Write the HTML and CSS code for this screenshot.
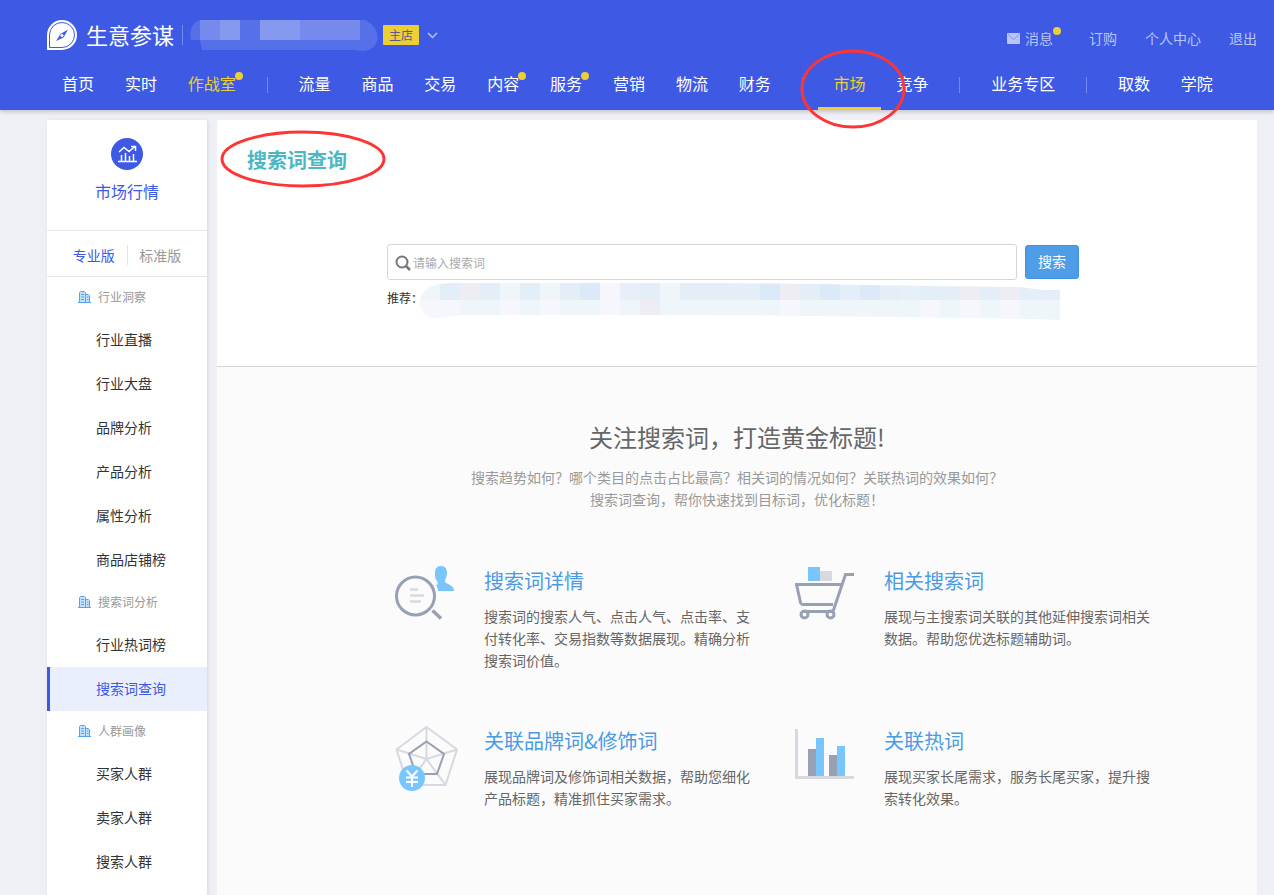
FILE: index.html
```html
<!DOCTYPE html>
<html lang="zh-CN">
<head>
<meta charset="utf-8">
<title>生意参谋 - 搜索词查询</title>
<link rel="stylesheet" href="styles.css">
</head>
<body>
<svg class="defs" width="0" height="0" aria-hidden="true">
  <symbol id="building" viewBox="0 0 13 12">
    <path fill="#c5e0f9" d="M2 1h5v10H2zM8 4h3v7H8z"/>
    <path fill="none" stroke="#55a4ec" d="M0 11.5h13M1.500 11V1.500L2.500.5h4l1 1V11M7.500 3.500h3l1 1V11M3 3.500h3M3 6h3M3 8.500h3M9 6h1.500M9 8.500h1.500"/>
  </symbol>
</svg>
<header class="header">
  <div class="topbar">
    <a class="logo" href="#">
      <svg width="30" height="30" viewBox="0 0 30 30" aria-hidden="true">
        <path fill="#fff" d="M0 30V15A15 15 0 1 1 15 30z"/>
        <path fill="none" stroke="#3e5ae4" stroke-width="1" d="M2.500 27.500V15A12.500 12.500 0 1 1 15 27.500z"/>
        <path fill="#3e5ae4" d="M21 9.500 16.500 17.500 9 21l4.500-7z"/>
        <circle cx="15" cy="15.500" r="1.500" fill="#fff"/>
      </svg>
      <span>生意参谋</span>
    </a>
    <span class="topbar-line"></span>
    <svg class="shop-name" width="188" height="32" viewBox="0 0 188 32" aria-hidden="true">
      <path fill="#5670e7" d="M10 1H175C192 8 192 31 173 32L164 31H12L10 21H1C-1 11 2 4 10 1z"/>
      <path fill="#758aec" d="M10 1h20v20H10zM110 1h60v20h-60z"/>
      <path fill="#8599ef" d="M30 1h20v20H30zM70 1h40v20H70z"/>
    </svg>
    <span class="shop-tag">主店</span>
    <svg class="caret" width="11" height="7" viewBox="0 0 11 7" aria-hidden="true"><path fill="none" stroke="#b4c0f5" stroke-width="1.500" d="M1 1l4.500 4.500L10 1"/></svg>
    <div class="user-links">
      <a class="has-dot" href="#"><svg width="13" height="11" viewBox="0 0 13 11" aria-hidden="true"><rect width="13" height="11" rx="1" fill="#b9c5f7"/><path fill="none" stroke="#7f93ee" d="M1 1.500l5.500 5 5.500-5"/></svg>消息</a>
      <a href="#">订购</a>
      <a href="#">个人中心</a>
      <a href="#">退出</a>
    </div>
  </div>
  <nav class="nav">
    <a href="#">首页</a>
    <a href="#">实时</a>
    <a class="highlight has-dot" href="#">作战室</a>
    <i></i>
    <a href="#">流量</a>
    <a href="#">商品</a>
    <a href="#">交易</a>
    <a class="has-dot" href="#">内容</a>
    <a class="has-dot" href="#">服务</a>
    <a href="#">营销</a>
    <a href="#">物流</a>
    <a href="#">财务</a>
    <i></i>
    <a class="highlight current" href="#">市场<svg class="ring nav-ring" width="106" height="80" viewBox="0 0 106 80" aria-hidden="true"><ellipse cx="53" cy="40" rx="51" ry="38"/></svg></a>
    <a href="#">竞争</a>
    <i></i>
    <a href="#">业务专区</a>
    <i></i>
    <a href="#">取数</a>
    <a href="#">学院</a>
  </nav>
</header>
<div class="page">
  <aside class="sidebar">
    <div class="module">
      <svg width="32" height="32" viewBox="0 0 32 32" aria-hidden="true">
        <circle cx="16" cy="16" r="16" fill="#3e5ae4"/>
        <path fill="none" stroke="#fff" stroke-width="1.500" d="M7 23.500h19M10.500 23v-6M14.500 23v-8M18.500 23v-5M22.500 23v-7M8 14l5-4.500 5 4 6-5M20 8.500h4.500V13"/>
      </svg>
      <span>市场行情</span>
    </div>
    <div class="editions">
      <button class="active" type="button">专业版</button>
      <button type="button">标准版</button>
    </div>
    <h3><svg width="13" height="12"><use href="#building"/></svg>行业洞察</h3>
    <a href="#">行业直播</a>
    <a href="#">行业大盘</a>
    <a href="#">品牌分析</a>
    <a href="#">产品分析</a>
    <a href="#">属性分析</a>
    <a href="#">商品店铺榜</a>
    <h3><svg width="13" height="12"><use href="#building"/></svg>搜索词分析</h3>
    <a href="#">行业热词榜</a>
    <a class="active" href="#">搜索词查询</a>
    <h3><svg width="13" height="12"><use href="#building"/></svg>人群画像</h3>
    <a href="#">买家人群</a>
    <a href="#">卖家人群</a>
    <a href="#">搜索人群</a>
  </aside>
  <main class="main">
    <section class="query">
      <h1>搜索词查询<svg class="ring title-ring" width="166" height="58" viewBox="0 0 166 58" aria-hidden="true"><ellipse cx="83" cy="29" rx="81" ry="27"/></svg></h1>
      <form class="search">
        <label class="search-box">
          <svg width="16" height="16" viewBox="0 0 16 16" aria-hidden="true"><circle cx="7" cy="7" r="5.500" fill="none" stroke="#777" stroke-width="2"/><path stroke="#777" stroke-width="2.500" d="M11 11l4 4"/></svg>
          <input type="text" placeholder="请输入搜索词" aria-label="搜索词">
        </label>
        <button type="button">搜索</button>
      </form>
      <div class="recommend">
        <span>推荐：</span>
        <svg width="641" height="38" viewBox="0 0 641 38" aria-hidden="true">
          <clipPath id="strip"><path d="M20 1 32 0H295L390 1 500 3 600 4 622 7H640V37L615 36 480 34 290 32H40L20 35Q2 37 0 20 1 5 20 1z"/></clipPath>
          <g clip-path="url(#strip)">
            <path fill="#e3eef8" d="M0 0h640v17H0z"/>
            <path fill="#eff6fa" d="M0 17h640v21H0zM0 0h20v17H0zM80 0h20v17H80zM120 0h20v17h-20zM240 0h20v17h-20z"/>
            <path fill="#dce9f9" d="M160 0h20v17h-20zM340 0h20v17h-20zM400 0h20v17h-20zM440 0h20v17h-20z"/>
            <path fill="#ededf3" d="M40 0h20v17H40zM360 0h20v17h-20zM540 0h20v17h-20zM580 0h20v17h-20zM220 17h20v21h-20z"/>
            <path fill="#e7effb" d="M200 0h20v17h-20zM480 0h20v17h-20z"/>
            <path fill="#f6f7fc" d="M180 0h20v38h-20zM0 17h40v21H0zM80 17h20v21H80zM120 17h20v21h-20zM360 17h20v21h-20zM500 17h20v21h-20zM540 17h20v21h-20zM580 17h20v21h-20z"/>
          </g>
        </svg>
      </div>
    </section>
    <section class="intro">
      <h2>关注搜索词，打造黄金标题!</h2>
      <p class="lead">搜索趋势如何？哪个类目的点击占比最高？相关词的情况如何？关联热词的效果如何？<br>搜索词查询，帮你快速找到目标词，优化标题！</p>
      <div class="features">
        <article>
          <svg width="64" height="66" viewBox="0 0 64 66" aria-hidden="true">
            <circle cx="20.500" cy="31" r="19" fill="none" stroke="#98a1b3" stroke-width="3"/>
            <path stroke="#98a1b3" stroke-width="3.500" d="M37.500 45.500l8.500 8"/>
            <path stroke="#d6dae0" stroke-width="2.500" d="M15 24.500h8M15 30.500h14M15 36.500h11"/>
            <path fill="#79c6ff" d="M46 1c4.500 0 6 3 6 7 0 3-1 5-2 7v2c3 3 9 3 9 9H43c0-3-1-4-2-6 2 0 2-2 1-4-2-2-2-5-2-8 0-4 1.500-7 6-7z"/>
          </svg>
          <div><h3>搜索词详情</h3><p>搜索词的搜索人气、点击人气、点击率、支付转化率、交易指数等数据展现。精确分析搜索词价值。</p></div>
        </article>
        <article>
          <svg width="64" height="66" viewBox="0 0 64 66" aria-hidden="true">
            <path fill="#79c6ff" d="M13 2h12v14H13z"/><path fill="#d6dadf" d="M25 6h12v10H25z"/>
            <g fill="none" stroke="#98a1b3" stroke-width="3"><path d="M0 19.500h46M1.500 19.500l4 18q.5 2 3 2H38M59 9.500h-8.500L38 46.500H8"/><circle cx="9.500" cy="49.500" r="3.500"/><circle cx="35.500" cy="49.500" r="3.500"/></g>
          </svg>
          <div><h3>相关搜索词</h3><p>展现与主搜索词关联的其他延伸搜索词相关数据。帮助您优选标题辅助词。</p></div>
        </article>
        <article>
          <svg width="64" height="66" viewBox="0 0 64 66" aria-hidden="true">
            <path fill="none" stroke="#d6dae0" stroke-width="2" d="M31.500 2 62 24.500 50.500 60H13L1.500 24.500zM31.500 2v32L62 24.500M31.500 34l19 26M31.500 34 13 60M31.500 34 1.500 24.500"/>
            <path fill="none" stroke="#98a1b3" stroke-width="2" d="M31.500 16.500 49 29l-7 20H21L14 29z"/>
            <circle cx="17" cy="53" r="13" fill="#79c6ff"/>
            <path fill="none" stroke="#fff" stroke-width="2" d="M11.500 45.500 17 51.500l5.500-6M17 51v11M11 52.500h12M11 57h12"/>
          </svg>
          <div><h3>关联品牌词&amp;修饰词</h3><p>展现品牌词及修饰词相关数据，帮助您细化产品标题，精准抓住买家需求。</p></div>
        </article>
        <article>
          <svg width="64" height="66" viewBox="0 0 64 66" aria-hidden="true">
            <path fill="none" stroke="#d6dadf" stroke-width="3" d="M1.500 4v48.500H59"/>
            <path fill="#98a1b3" d="M13 24h8v27h-8zM34 30h8v21h-8z"/><path fill="#79c6ff" d="M21 13h8v38h-8zM42 21h8v30h-8z"/>
          </svg>
          <div><h3>关联热词</h3><p>展现买家长尾需求，服务长尾买家，提升搜索转化效果。</p></div>
        </article>
      </div>
    </section>
  </main>
</div>
</body>
</html>
```

FILE: styles.css
```css
* { box-sizing: border-box; }
body {
  margin: 0;
  min-height: 100vh;
  display: flex;
  flex-direction: column;
  background: #eff0f6;
  color: #333;
  font: 14px/22px "Noto Sans CJK SC", sans-serif;
}
a { color: inherit; text-decoration: none; }
h1, h2, h3, p { margin: 0; font-weight: 400; }
svg { flex: none; }
button, input { font: inherit; }
.defs { position: absolute; }

.header {
  padding: 0 17px 0 47px;
  background: #3e5ae4;
  color: #fff;
  box-shadow: 0 2px 4px rgba(0, 0, 0, .18);
}
.topbar { display: flex; align-items: center; height: 60px; padding-top: 10px; }
.logo { display: flex; align-items: center; gap: 9px; font-size: 22px; }
.logo span { padding-bottom: 2px; }
.topbar-line { width: 1px; height: 20px; margin: 0 7px 0 8px; background: #7388ec; }
.shop-tag {
  margin: 0 8px 0 5px;
  padding: 0 6px;
  border-radius: 1px;
  background: #eccf34;
  color: #5a5a88;
  font-size: 12px;
  line-height: 20px;
}
.user-links { display: flex; gap: 28px; margin-left: auto; padding-top: 6px; color: #b9c5f7; }
.user-links a:first-child { display: flex; align-items: center; gap: 5px; margin-right: 8px; }
.has-dot { position: relative; }
.has-dot::after {
  content: "";
  position: absolute;
  top: 0;
  right: -8px;
  width: 8px;
  height: 8px;
  border-radius: 50%;
  background: #eccf34;
}

.nav {
  display: flex;
  align-items: flex-start;
  justify-content: space-between;
  height: 50px;
  padding: 0 44px 0 15px;
  font-size: 16px;
  line-height: 46px;
}
.nav a { height: 50px; }
.nav i { width: 1px; height: 16px; margin-top: 17px; background: #7388ec; }
.nav .has-dot::after { top: 12px; right: -7px; }
.highlight { color: #eccf34; }
.current { position: relative; }
.current::before {
  content: "";
  position: absolute;
  right: -15px;
  bottom: 0;
  left: -16px;
  height: 3px;
  background: #eccf34;
}
.ring { position: absolute; z-index: 2; fill: none; stroke: #ff3535; stroke-width: 3px; pointer-events: none; }
.nav-ring { top: -11px; left: -34px; }
.title-ring { top: -16px; left: -27px; }

.page { flex: 1; display: flex; gap: 10px; padding: 10px 17px 0 47px; }
.sidebar { flex: none; width: 160px; background: #fff; box-shadow: 1px 1px 4px rgba(0, 0, 0, .1); }
.module {
  display: flex;
  flex-direction: column;
  align-items: center;
  gap: 10px;
  height: 111px;
  padding-top: 18px;
  border-bottom: 1px solid #e8e8ea;
  color: #3e5ae4;
  font-size: 16px;
}
.editions { display: flex; align-items: center; height: 46px; padding: 2px 14px 0; border-bottom: 1px solid #e8e8ea; }
.editions button { flex: 1; padding: 0; border: 0; background: none; color: #999; line-height: 20px; }
.editions button + button { border-left: 1px solid #e5e5e8; }
.editions .active { color: #3e5ae4; }
.sidebar h3 { display: flex; align-items: center; gap: 7px; height: 41px; padding: 0 0 2px 31px; color: #999; font-size: 12px; }
.sidebar a { display: block; padding: 0 0 2px 49px; line-height: 42px; }
.sidebar a.active { padding-left: 46px; border-left: 3px solid #3e5ae4; background: #e9effc; color: #3e5ae4; }

.main { flex: 1; display: flex; flex-direction: column; background: #fff; }
.query { height: 247px; padding: 26px 0 0 30px; border-bottom: 1px solid #d5d6da; }
.query h1 { position: relative; width: max-content; color: #4cb6c3; font-size: 20px; font-weight: 700; line-height: 28px; }
.search { display: flex; align-items: center; gap: 8px; margin: 70px 178px 0 140px; }
.search-box {
  flex: 1;
  display: flex;
  align-items: center;
  gap: 2px;
  height: 36px;
  padding: 2px 7px 0;
  border: 1px solid #d5d6da;
  border-radius: 3px;
}
.search-box input { flex: 1; padding: 0; border: 0; outline: 0; background: none; font-size: 12px; }
.search-box input::placeholder { color: #aaa; }
.search button {
  height: 34px;
  padding: 0 12px 2px;
  border: 1px solid #4190e2;
  border-radius: 3px;
  background: #4f9de6;
  color: #fff;
}
.recommend { display: flex; margin: 3px 0 0 140px; font-size: 12px; }
.recommend span { width: 33px; padding-top: 4px; white-space: nowrap; }

.intro { flex: 1; padding: 54px 0 40px; background: #fbfbfb; color: #666; }
.intro h2 { font-size: 24px; line-height: 32px; text-align: center; }
.lead { margin-top: 13px; color: #999; text-align: center; }
.features { display: grid; grid-template-columns: 1fr 1fr; gap: 52px 40px; padding: 0 102px 0 178px; margin-top: 55px; }
.features article { display: flex; gap: 25px; min-height: 108px; }
.features h3 { margin: 2px 0 10px; color: #4a9ae4; font-size: 20px; line-height: 28px; }
```
